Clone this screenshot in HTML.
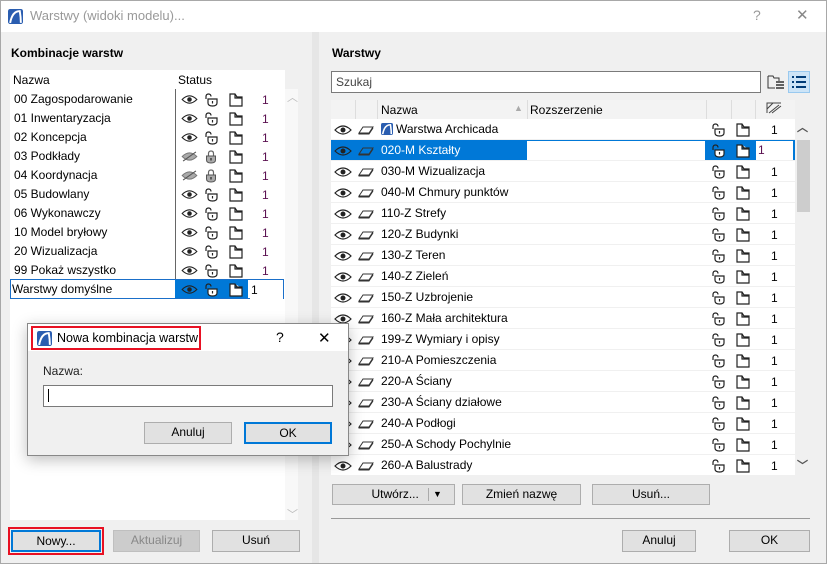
<!DOCTYPE html>
<html><head><meta charset="utf-8"><style>
*{box-sizing:border-box;margin:0;padding:0}
body{width:827px;height:564px;overflow:hidden;background:#f0f0f0;font-family:"Liberation Sans",sans-serif;font-size:12px;color:#000;position:relative}
.a{position:absolute}
.win{left:0;top:0;width:827px;height:564px;border:1px solid #a8a8a8}
.btn{position:absolute;background:#e1e1e1;border:1px solid #adadad;text-align:center;font-size:12px;line-height:19px}
.row{position:absolute;height:19px;line-height:19px;white-space:nowrap}
svg.i{position:absolute}
.n{position:absolute;color:#5a1050}
</style></head><body>
<svg width="0" height="0" style="position:absolute">
<defs>
<symbol id="eye" viewBox="0 0 18 12"><path d="M1 6 Q9 -2 17 6 Q9 14 1 6Z" fill="none" stroke="#222" stroke-width="1.2"/><circle cx="9" cy="6" r="2.5" fill="#222"/></symbol>
<symbol id="eyeo" viewBox="0 0 18 12"><path d="M1 6 Q9 -2 17 6 Q9 14 1 6Z" fill="#aaa" stroke="#777" stroke-width="1"/><path d="M2 11 L16 1" stroke="#555" stroke-width="1.2"/></symbol>
<symbol id="lk" viewBox="0 0 14 14"><path d="M2 6 V3.5 Q2 1 4.5 1 Q7 1 7 3.5" fill="none" stroke="#222" stroke-width="1.2"/><path d="M4 6 H13 V10 Q13 13 8.5 13 Q4 13 4 10Z" fill="#fff" stroke="#222" stroke-width="1.2"/><path d="M8.5 8 V10.5" stroke="#222" stroke-width="1.2"/></symbol>
<symbol id="lkc" viewBox="0 0 14 14"><path d="M4.5 6 V3.5 Q4.5 1 7 1 Q9.5 1 9.5 3.5 V6" fill="none" stroke="#666" stroke-width="1.2"/><path d="M2.5 6 H11.5 V10 Q11.5 13 7 13 Q2.5 13 2.5 10Z" fill="#aaa" stroke="#555" stroke-width="1"/><path d="M7 8 V10.5" stroke="#222" stroke-width="1.2"/></symbol>
<symbol id="fd" viewBox="0 0 14 14"><path d="M1 1 H6 L8 4 H13 V13 H1Z M6 1 V5 H13" fill="#fff" stroke="#222" stroke-width="1.2"/></symbol>
<symbol id="ly" viewBox="0 0 16 10"><path d="M1 8 L5 2 H15 L11 8Z M1 8 V9 H11 L15 3" fill="none" stroke="#333" stroke-width="1"/></symbol>
<symbol id="ar" viewBox="0 0 14 14"><rect width="14" height="14" rx="2" fill="#2a5db0"/><path d="M2 13 Q4 2 11 2 Q12 8 12 13" fill="none" stroke="#fff" stroke-width="1.8"/></symbol>
</defs></svg>
<div class="a win"></div>
<div class="a" style="left:1px;top:1px;width:825px;height:31px;background:#fff"></div>
<svg class="i" style="left:8px;top:9px" width="15" height="15"><use href="#ar"/></svg>
<div class="a" style="left:30px;top:8px;font-size:13px;color:#999">Warstwy (widoki modelu)...</div>
<div class="a" style="left:753px;top:7px;font-size:14px;color:#999">?</div>
<div class="a" style="left:796px;top:6px;font-size:15px;color:#888">✕</div>

<div class="a" style="left:312px;top:32px;width:7px;height:531px;background:#e6e6e6"></div>
<!-- left -->
<div class="a" style="left:11px;top:46px;font-weight:bold">Kombinacje warstw</div>
<div class="a" style="left:10px;top:70px;width:275px;height:450px;background:#fff"></div>
<div class="a" style="left:285px;top:89px;width:13px;height:431px;background:#f8f8f8"></div>
<div class="a" style="left:287px;top:89px;color:#bbb;font-size:11px">︿</div>
<div class="a" style="left:287px;top:506px;color:#bbb;font-size:11px">﹀</div>
<div class="row" style="left:13px;top:71px">Nazwa</div>
<div class="row" style="left:178px;top:71px">Status</div>
<div class="a" style="left:175px;top:89px;width:1px;height:190px;background:#666"></div>
<div class="a" style="left:10px;top:279px;width:274px;height:20px;border:1px solid #1a6fc9"></div>
<div class="a" style="left:175px;top:280px;width:73px;height:18px;background:#0078d7"></div>
<div id="L"></div>

<div class="a" style="left:8px;top:527px;width:96px;height:28px;border:2px solid #e81123"></div>
<div class="btn" style="left:11px;top:530px;width:90px;height:22px;border:2px solid #0078d7;line-height:18px">Nowy...</div>
<div class="btn" style="left:113px;top:530px;width:87px;height:22px;color:#888;background:#ccc;border-color:#bfbfbf">Aktualizuj</div>
<div class="btn" style="left:212px;top:530px;width:88px;height:22px">Usuń</div>

<!-- right -->
<div class="a" style="left:332px;top:46px;font-weight:bold">Warstwy</div>
<div class="a" style="left:331px;top:71px;width:430px;height:22px;background:#fff;border:1px solid #7a7a7a;padding:3px 4px;color:#444">Szukaj</div>
<svg class="i" style="left:767px;top:74px" width="18" height="16" viewBox="0 0 18 16"><path d="M1 2 H6 L7 4 H12 V7 M1 2 V14 H8" fill="none" stroke="#333"/><path d="M9 8 H17 M9 11 H17 M9 14 H17" stroke="#333" stroke-width="1.5"/></svg>
<div class="a" style="left:788px;top:71px;width:22px;height:22px;background:#cce4f7;border:1px solid #99c9ef"></div>
<svg class="i" style="left:791px;top:75px" width="16" height="14"><path d="M1 2H3M5 2H15M1 7H3M5 7H15M1 12H3M5 12H15" stroke="#003c78" stroke-width="2"/></svg>
<div class="a" style="left:331px;top:100px;width:464px;height:19px;background:#f3f3f3"></div>
<div class="a" style="left:331px;top:119px;width:464px;height:357px;background:#fff"></div>
<div class="a" style="left:795px;top:119px;width:15px;height:357px;background:#f0f0f0"></div>
<div class="a" style="left:797px;top:140px;width:13px;height:72px;background:#cdcdcd"></div>
<div class="a" style="left:797px;top:119px;color:#555;font-size:11px;font-weight:bold">︿</div>
<div class="a" style="left:797px;top:457px;color:#555;font-size:11px;font-weight:bold">﹀</div>
<div class="row" style="left:381px;top:101px">Nazwa</div>
<div class="a" style="left:514px;top:103px;color:#aaa;font-size:9px">▲</div>
<div class="row" style="left:530px;top:101px">Rozszerzenie</div>
<div id="H"></div>
<svg class="i" style="left:766px;top:102px" width="16" height="12"><path d="M1 11V1H15M3 11L13 3M1 7L7 1M6 11L15 4" stroke="#444" fill="none"/></svg>
<div class="a" style="left:331px;top:140px;width:464px;height:21px;background:#0078d7"></div>
<div class="a" style="left:527px;top:141px;width:178px;height:19px;background:#fff"></div>
<div class="a" style="left:756px;top:141px;width:37px;height:19px;background:#fff;padding-left:2px;line-height:19px;color:#5a1050">1</div>
<div id="R"></div>

<div class="btn" style="left:332px;top:484px;width:123px;height:21px">&nbsp;Utwórz...<span style="position:absolute;left:95px;top:3px;width:1px;height:13px;background:#aaa"></span><span style="position:absolute;left:100px;top:0;font-size:9px">▼</span></div>
<div class="btn" style="left:462px;top:484px;width:119px;height:21px">Zmień nazwę</div>
<div class="btn" style="left:592px;top:484px;width:118px;height:21px">Usuń...</div>
<div class="a" style="left:331px;top:518px;width:479px;height:1px;background:#999"></div>
<div class="btn" style="left:622px;top:530px;width:74px;height:22px">Anuluj</div>
<div class="btn" style="left:729px;top:530px;width:81px;height:22px">OK</div>

<!-- popup -->
<div class="a" style="left:27px;top:323px;width:322px;height:133px;background:#f0f0f0;border:1px solid #888;box-shadow:0 4px 14px rgba(0,0,0,.25)"></div>
<div class="a" style="left:28px;top:324px;width:320px;height:27px;background:#fff"></div>
<div class="a" style="left:31px;top:326px;width:170px;height:24px;border:2px solid #e81123"></div>
<svg class="i" style="left:37px;top:331px" width="15" height="15"><use href="#ar"/></svg>
<div class="a" style="left:57px;top:331px;font-size:12.5px">Nowa kombinacja warstw</div>
<div class="a" style="left:276px;top:329px;font-size:14px">?</div>
<div class="a" style="left:318px;top:329px;font-size:15px">✕</div>
<div class="a" style="left:43px;top:364px;color:#222">Nazwa:</div>
<div class="a" style="left:43px;top:385px;width:290px;height:22px;background:#fff;border:1px solid #7a7a7a"></div>
<div class="a" style="left:48px;top:389px;width:1px;height:13px;background:#000"></div>
<div class="btn" style="left:144px;top:422px;width:88px;height:22px">Anuluj</div>
<div class="btn" style="left:244px;top:422px;width:88px;height:22px;border:2px solid #0078d7;line-height:18px">OK</div>

<script>
var L=["00 Zagospodarowanie","01 Inwentaryzacja","02 Koncepcja","03 Podkłady","04 Koordynacja","05 Budowlany","06 Wykonawczy","10 Model bryłowy","20 Wizualizacja","99 Pokaż wszystko","Warstwy domyślne"];
var h="";
L.forEach(function(t,i){var y=90+i*19;var last=i==10;
h+='<div class="row" style="left:'+(last?12:14)+'px;top:'+y+'px">'+t+'</div>';
var hid=(i==3||i==4);
h+='<svg class="i" style="left:181px;top:'+(y+4)+'px" width="17" height="11"><use href="#'+(hid?'eyeo':'eye')+'"/></svg>';
h+='<svg class="i" style="left:204px;top:'+(y+3)+'px" width="14" height="14"><use href="#'+(hid?'lkc':'lk')+'"/></svg>';
h+='<svg class="i" style="left:229px;top:'+(y+3)+'px" width="14" height="14"><use href="#fd"/></svg>';
h+='<div class="n" style="left:'+(last?250:262)+'px;top:'+(y+3)+'px;'+(last?'color:#000;background:#fff;width:33px;height:18px;top:'+(y+1)+'px;line-height:18px;padding-left:1px':'')+'">1</div>';});
document.getElementById("L").innerHTML=h;
var H="";[355,377,527,706,731,755].forEach(function(x){H+='<div class="a" style="left:'+x+'px;top:100px;width:1px;height:19px;background:#ddd"></div>'});
document.getElementById("H").innerHTML=H;
var R=["Warstwa Archicada","020-M Kształty","030-M Wizualizacja","040-M Chmury punktów","110-Z Strefy","120-Z Budynki","130-Z Teren","140-Z Zieleń","150-Z Uzbrojenie","160-Z Mała architektura","199-Z Wymiary i opisy","210-A Pomieszczenia","220-A Ściany","230-A Ściany działowe","240-A Podłogi","250-A Schody Pochylnie","260-A Balustrady"];
var r="";R.forEach(function(t,i){var y=119+i*21;var s=i==1;
r+='<div class="a" style="left:331px;top:'+(y+20)+'px;width:464px;height:1px;background:#f0f0f0"></div>';
r+='<svg class="i" style="left:334px;top:'+(y+5)+'px" width="18" height="12"><use href="#eye"/></svg>';
r+='<svg class="i" style="left:358px;top:'+(y+6)+'px" width="16" height="10"><use href="#ly"/></svg>';
var x=381;if(i==0){r+='<svg class="i" style="left:381px;top:'+(y+4)+'px" width="12" height="12"><use href="#ar"/></svg>';x=396;}
r+='<div class="row" style="left:'+x+'px;top:'+(y+1)+'px;'+(s?'color:#fff':'')+'">'+t+'</div>';
r+='<svg class="i" style="left:711px;top:'+(y+4)+'px" width="14" height="14"><use href="#lk"/></svg>';
r+='<svg class="i" style="left:736px;top:'+(y+4)+'px" width="14" height="14"><use href="#fd"/></svg>';
if(!s)r+='<div class="a" style="left:771px;top:'+(y+4)+'px">1</div>';});
document.getElementById("R").innerHTML=r;
</script>
</body></html>
